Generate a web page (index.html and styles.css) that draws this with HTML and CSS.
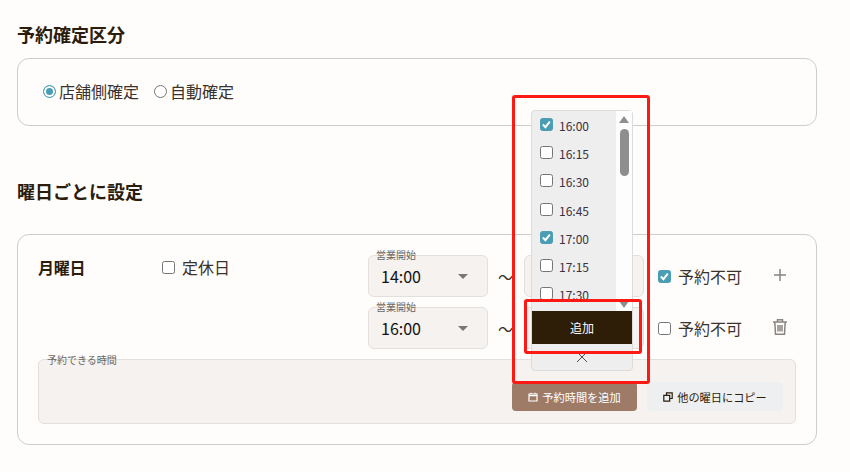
FILE: index.html
```html
<!DOCTYPE html>
<html lang="ja">
<head>
    <meta charset="UTF-8">
    <title>予約設定</title>
    <link rel="stylesheet" href="styles.css">
</head>
<body>
<h2 class="section-title">予約確定区分</h2>
<div class="card confirm-card">
    <label class="radio-label"><span class="radio checked"></span>店舗側確定</label>
    <label class="radio-label"><span class="radio"></span>自動確定</label>
</div>

<h2 class="section-title second">曜日ごとに設定</h2>
<div class="card day-card">
    <div class="day-head">
        <div class="day-name">月曜日</div>
        <label class="check-label holiday"><span class="check"></span>定休日</label>
        <div class="time-rows">
            <div class="time-row">
                <div class="select"><span class="select-label">営業開始</span>14:00<span class="caret"></span></div>
                <span class="tilde">〜</span>
                <div class="select"></div>
                <label class="check-label"><span class="check checked"><svg viewBox="0 0 13 13"><path d="M2.2 6.6l3 3 5.2-6.4" /></svg></span>予約不可</label>
                <svg class="row-icon" viewBox="0 0 16 16"><path d="M8 2v12M2 8h12" /></svg>
            </div>
            <div class="time-row">
                <div class="select"><span class="select-label">営業開始</span>16:00<span class="caret"></span></div>
                <span class="tilde">〜</span>
                <div class="select"></div>
                <label class="check-label"><span class="check"></span>予約不可</label>
                <svg class="row-icon" viewBox="0 0 16 16"><path d="M1 3h14M5.5 3V.7h5V3M2.8 3l.7 12.3h9l.7-12.3M6 6v6.6M8 6v6.6M10 6v6.6" /></svg>
            </div>
        </div>
    </div>
    <div class="slots-box">
        <span class="slots-label">予約できる時間</span>
        <button class="btn btn-add"><svg viewBox="0 0 10 10"><path d="M1 2h8v7H1zM1 3.6h8M3 .8v1.4M7 .8v1.4" /></svg>予約時間を追加</button>
        <button class="btn btn-copy"><svg viewBox="0 0 10 10"><path d="M3.5 3V.8h5.7v5.7H7M.8 3.3h5.9v5.9H.8z" /></svg>他の曜日にコピー</button>
    </div>
</div>

<!-- popup and the red highlight marks sit over the page -->
<div class="popup">
    <div class="popup-list">
        <ul class="time-list">
            <li><span class="check checked"><svg viewBox="0 0 13 13"><path d="M2.2 6.6l3 3 5.2-6.4" /></svg></span>16:00</li>
            <li><span class="check"></span>16:15</li>
            <li><span class="check"></span>16:30</li>
            <li><span class="check"></span>16:45</li>
            <li><span class="check checked"><svg viewBox="0 0 13 13"><path d="M2.2 6.6l3 3 5.2-6.4" /></svg></span>17:00</li>
            <li><span class="check"></span>17:15</li>
            <li><span class="check"></span>17:30</li>
        </ul>
        <div class="scrollbar">
            <span class="arrow-up"></span>
            <span class="thumb"></span>
            <span class="arrow-down"></span>
        </div>
    </div>
    <button class="popup-add">追加</button>
    <div class="popup-close"><svg viewBox="0 0 12 12"><path d="M1 1l10 10M11 1L1 11" /></svg></div>
</div>
<div class="mark mark-outer"></div>
<div class="mark mark-inner"></div>
</body>
</html>
```

FILE: styles.css
```css
:root {
    --text-color: #2b1c0c;
    --border-color: #cfcdcb;
    --field-bg: #f5f2f0;
    --field-border: #e2dfdd;
    --accent-color: #4a9db3;
    --mark-color: #fd1a14;
}

* {
    margin: 0;
    padding: 0;
    box-sizing: border-box;
}

body {
    font-family: "Noto Sans CJK JP", "Noto Sans", sans-serif;
    background: #fffdfc;
    color: var(--text-color);
    padding: 22px 33px 0 17px;
    height: 472px;
    overflow: hidden;
    position: relative;
}

.section-title {
    font-size: 18px;
    font-weight: 700;
    line-height: 24px;
}

.section-title.second {
    margin-top: 53px;
}

.card {
    background: #fffdfc;
    border: 1px solid var(--border-color);
    border-radius: 12px;
    margin-top: 12px;
}

.confirm-card {
    height: 68px;
    display: flex;
    align-items: center;
    gap: 15px;
    padding: 0 25px 2px;
    font-size: 16px;
}

.radio-label {
    display: flex;
    align-items: center;
    gap: 3px;
    color: #3a322c;
}

.radio {
    width: 13px;
    height: 13px;
    border: 1px solid #767676;
    border-radius: 50%;
    background: #fff;
    flex: none;
}

.radio.checked {
    border-color: var(--accent-color);
    background: var(--accent-color);
    box-shadow: inset 0 0 0 2px #fff;
}

.day-card {
    height: 211px;
    margin-top: 31px;
    padding: 20px;
}

.day-head {
    display: flex;
    align-items: flex-start;
}

.day-name {
    width: 124px;
    font-size: 16px;
    font-weight: 700;
    line-height: 24px;
    letter-spacing: -0.3px;
}

.check-label {
    display: flex;
    align-items: center;
    gap: 7px;
    font-size: 16px;
    line-height: 24px;
    color: #3a322c;
}

.holiday {
    width: 206px;
}

.check {
    width: 13px;
    height: 13px;
    border: 1px solid #767676;
    border-radius: 2.5px;
    background: #fff;
    flex: none;
    display: block;
}

.check.checked {
    border-color: var(--accent-color);
    background: var(--accent-color);
}

.check svg {
    display: block;
    width: 11px;
    height: 11px;
    fill: none;
    stroke: #fff;
    stroke-width: 2.4;
}

.time-rows {
    display: flex;
    flex-direction: column;
    gap: 10px;
}

.time-row {
    display: flex;
    align-items: center;
    height: 42px;
}

.select {
    position: relative;
    width: 120px;
    height: 42px;
    background: var(--field-bg);
    border: 1px solid var(--field-border);
    border-radius: 6px;
    font-size: 16px;
    line-height: 40px;
    padding-left: 12px;
    color: #111;
}

.select-label {
    position: absolute;
    left: 7px;
    top: -8px;
    font-size: 10px;
    line-height: 14px;
    color: #6b6661;
}

.caret {
    position: absolute;
    right: 19px;
    top: 18px;
    border-left: 5px solid transparent;
    border-right: 5px solid transparent;
    border-top: 5px solid #7b7772;
}

.tilde {
    width: 36px;
    padding-left: 10px;
    font-size: 15px;
    color: #3a322c;
}

.time-row .check-label {
    margin-left: 14px;
    width: 114px;
}

.row-icon {
    width: 16px;
    height: 16px;
    margin-bottom: 3px;
    fill: none;
    stroke: #888480;
    stroke-width: 1.5;
}

.slots-box {
    position: relative;
    height: 65px;
    margin-top: 10px;
    background: var(--field-bg);
    border: 1px solid var(--field-border);
    border-radius: 6px;
    display: flex;
    justify-content: flex-end;
    align-items: flex-end;
    gap: 10px;
    padding: 0 12px 12px 0;
}

.slots-label {
    position: absolute;
    left: 8px;
    top: -7px;
    font-size: 10px;
    line-height: 14px;
    color: #6b6661;
}

.btn {
    height: 29px;
    border: none;
    border-radius: 4px;
    font-family: inherit;
    font-size: 11.2px;
    display: flex;
    align-items: center;
    justify-content: center;
    gap: 4px;
}

.btn svg {
    width: 10px;
    height: 10px;
    fill: none;
    stroke-width: 1.2;
}

.btn-add {
    width: 125px;
    background: #9d7b67;
    color: #fff;
}

.btn-add svg {
    stroke: #fff;
}

.btn-copy {
    width: 136px;
    background: #eeeff1;
    color: var(--text-color);
}

.btn-copy svg {
    stroke: var(--text-color);
}

.popup {
    position: absolute;
    left: 531px;
    top: 110px;
    width: 102px;
    height: 261px;
    background: #eeeeee;
    border: 1px solid #dcdcdc;
    border-radius: 4px;
    display: flex;
    flex-direction: column;
}

.popup-list {
    display: flex;
    height: 200px;
    overflow: hidden;
}

.time-list {
    list-style: none;
    flex: 1;
    overflow: hidden;
    padding-top: 0.5px;
}

.time-list li {
    display: flex;
    align-items: center;
    gap: 6px;
    height: 28.2px;
    padding-left: 8px;
    font-size: 12px;
    color: #3a3040;
}

.time-list .check {
    margin-bottom: 2px;
}

.scrollbar {
    width: 16px;
    background: #fdfdfd;
    display: flex;
    flex-direction: column;
    align-items: center;
    position: relative;
}

.arrow-up {
    margin-top: 5px;
    border-left: 5px solid transparent;
    border-right: 5px solid transparent;
    border-bottom: 7px solid #8e8e8e;
}

.thumb {
    width: 9px;
    height: 47px;
    margin-top: 6px;
    background: #8e8e8e;
    border-radius: 5px;
}

.arrow-down {
    position: absolute;
    bottom: 3px;
    border-left: 5px solid transparent;
    border-right: 5px solid transparent;
    border-top: 7px solid #8e8e8e;
}

.popup-add {
    width: 100px;
    height: 33px;
    border: none;
    background: #2e1d07;
    color: #fff;
    font-family: inherit;
    font-size: 12px;
}

.popup-close {
    display: flex;
    justify-content: center;
    padding-top: 7px;
}

.popup-close svg {
    width: 12px;
    height: 12px;
    fill: none;
    stroke: #55504c;
    stroke-width: 1;
}

.mark {
    position: absolute;
    border: 3px solid var(--mark-color);
    border-radius: 3px;
}

.mark-outer {
    left: 512px;
    top: 95px;
    width: 138px;
    height: 289px;
}

.mark-inner {
    left: 524px;
    top: 299px;
    width: 118px;
    height: 55px;
}
```
